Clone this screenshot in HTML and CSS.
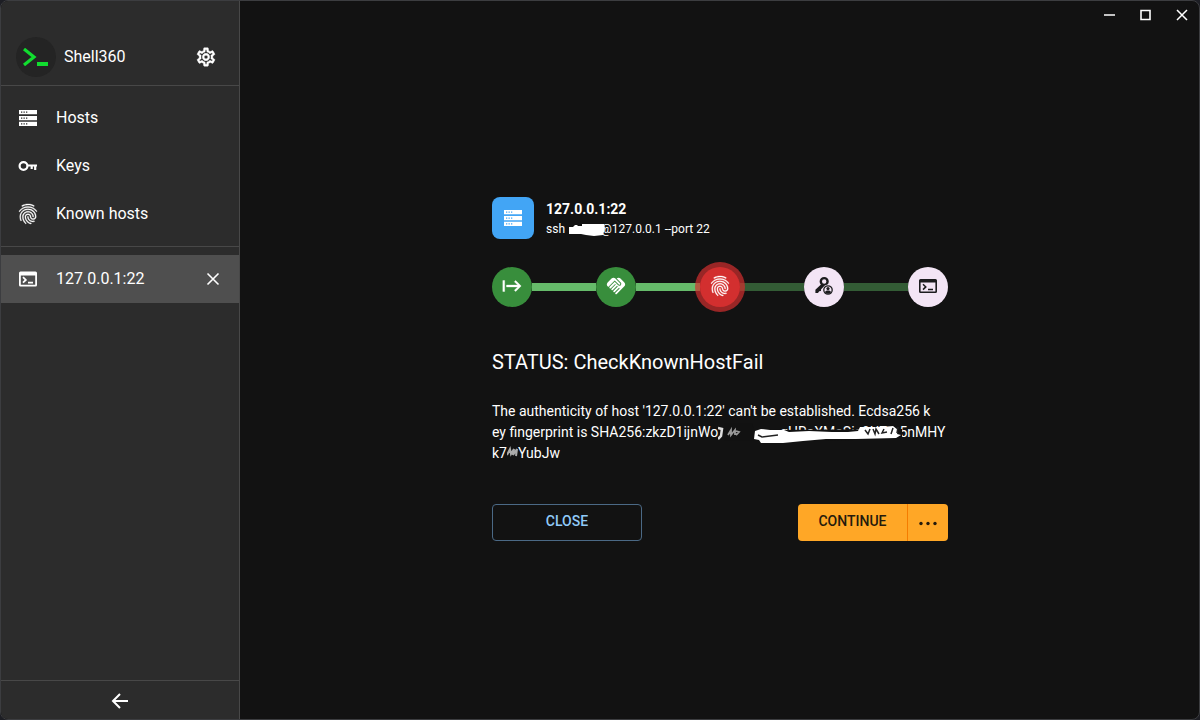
FILE: index.html
```html
<!DOCTYPE html>
<html lang="en">
<head>
<meta charset="utf-8">
<meta name="viewport" content="width=device-width, initial-scale=1">
<title>Shell360</title>
<link rel="stylesheet" href="styles.css">
</head>
<body>
<svg class="sprite" aria-hidden="true">
  <symbol id="i-finger" viewBox="0 0 24 24"><path stroke="currentColor" stroke-width=".35" d="M17.81 4.47c-.08 0-.16-.02-.23-.06C15.66 3.42 14 3 12.01 3c-1.98 0-3.86.47-5.57 1.41-.24.13-.54.04-.68-.2-.13-.24-.04-.55.2-.68C7.82 2.52 9.86 2 12.01 2c2.13 0 3.99.47 6.03 1.52.25.13.34.43.21.67-.09.18-.26.28-.44.28M3.5 9.72c-.1 0-.2-.03-.29-.09-.23-.16-.28-.47-.12-.7.99-1.4 2.25-2.5 3.75-3.27C9.98 4.04 14 4.03 17.15 5.65c1.5.77 2.76 1.86 3.75 3.25.16.22.11.54-.12.7-.23.16-.54.11-.7-.12-.9-1.26-2.04-2.25-3.39-2.94-2.87-1.47-6.54-1.47-9.4.01-1.36.7-2.5 1.7-3.4 2.96-.08.14-.23.21-.39.21m6.25 12.07c-.13 0-.26-.05-.35-.15-.87-.87-1.34-1.43-2.01-2.64-.69-1.23-1.05-2.73-1.05-4.34 0-2.97 2.54-5.39 5.66-5.39s5.66 2.42 5.66 5.39c0 .28-.22.5-.5.5s-.5-.22-.5-.5c0-2.42-2.09-4.39-4.66-4.39-2.57 0-4.66 1.97-4.66 4.39 0 1.44.32 2.77.93 3.85.64 1.15 1.08 1.64 1.85 2.42.19.2.19.51 0 .71-.11.1-.24.15-.37.15m7.17-1.85c-1.19 0-2.24-.3-3.1-.89-1.49-1.01-2.38-2.65-2.38-4.39 0-.28.22-.5.5-.5s.5.22.5.5c0 1.41.72 2.74 1.94 3.56.71.48 1.54.71 2.54.71.24 0 .64-.03 1.04-.1.27-.05.53.13.58.41.05.27-.13.53-.41.58-.57.11-1.07.12-1.21.12M14.91 22c-.04 0-.09-.01-.13-.02-1.59-.44-2.63-1.03-3.72-2.1-1.4-1.39-2.17-3.24-2.17-5.22 0-1.62 1.38-2.94 3.08-2.94 1.7 0 3.08 1.32 3.08 2.94 0 1.07.93 1.94 2.08 1.94s2.08-.87 2.08-1.94c0-3.77-3.25-6.83-7.25-6.83-2.84 0-5.44 1.58-6.61 4.03-.39.81-.59 1.76-.59 2.8 0 .78.07 2.01.67 3.61.1.26-.03.55-.29.64-.26.1-.55-.04-.64-.29-.49-1.31-.73-2.61-.73-3.96 0-1.2.23-2.29.68-3.24 1.33-2.79 4.28-4.6 7.51-4.6 4.55 0 8.25 3.51 8.25 7.83 0 1.62-1.38 2.94-3.08 2.94s-3.08-1.32-3.08-2.94c0-1.07-.93-1.94-2.08-1.94s-2.08.87-2.08 1.94c0 1.71.66 3.31 1.87 4.51.95.94 1.86 1.46 3.27 1.85.27.07.42.35.35.61-.05.23-.26.38-.47.38"/></symbol>
  <symbol id="i-hosts" viewBox="0 0 24 24"><path fill-rule="evenodd" d="M3 4h18v4.300H3zM5 5.500v1.300h1.300V5.500zM7.500 5.500v1.300h1.300V5.500zM10 5.500v1.300h1.300V5.500zM3 9.900h18v4.300H3zM5 11.400v1.300h1.300v-1.300zM7.500 11.400v1.300h1.300v-1.300zM10 11.400v1.300h1.300v-1.300zM3 15.800h18v4.300H3zM5 17.300v1.300h1.300v-1.300zM7.500 17.300v1.300h1.300v-1.300zM10 17.300v1.300h1.300v-1.300z"/></symbol>
  <symbol id="i-key" viewBox="0 0 24 24"><g fill="none" stroke="currentColor" stroke-width="2.200"><circle cx="7.500" cy="12" r="3.900"/><path d="M11.500 11.500H21M15.700 12v3M19.200 12v4"/></g></symbol>
  <symbol id="i-term" viewBox="0 0 24 24"><path fill-rule="evenodd" d="M4.500 4.500h15A1.500 1.500 0 0 1 21 6v12a1.500 1.500 0 0 1-1.500 1.500h-15A1.500 1.500 0 0 1 3 18V6A1.500 1.500 0 0 1 4.500 4.500zM4.800 8.600v9.100h14.400V8.600z"/><path d="m7 10.200 2.800 2.700L7 15.600M12 15.600h5" fill="none" stroke="currentColor" stroke-width="1.800"/></symbol>
  <symbol id="i-x" viewBox="0 0 24 24"><path d="m6.500 6.500 11 11m0-11-11 11" fill="none" stroke="currentColor" stroke-width="1.600"/></symbol>
</svg>
<div class="window">
  <aside class="sidebar">
    <header class="brand">
      <svg class="logo" viewBox="0 0 40 40" aria-hidden="true"><circle cx="20" cy="20" r="20" fill="#242424"/><path d="m8 12 10 8-10 8" fill="none" stroke="#11dd2f" stroke-width="3.200"/><path d="M21 25h11v4H21z" fill="#11dd2f"/></svg>
      <span class="label">Shell360</span>
      <button class="icon-btn" type="button" aria-label="Settings"><svg class="icon-m" viewBox="0 0 24 24"><path stroke="currentColor" stroke-width=".5" d="M19.43 12.98c.04-.32.07-.64.07-.98s-.03-.66-.07-.98l2.11-1.65c.19-.15.24-.42.12-.64l-2-3.46c-.09-.16-.26-.25-.44-.25-.06 0-.12.01-.17.03l-2.49 1c-.52-.4-1.08-.73-1.69-.98l-.38-2.65C14.46 2.180 14.250 2 14 2h-4c-.25 0-.46.18-.49.42l-.38 2.650c-.61.25-1.170.59-1.690.98l-2.490-1c-.06-.02-.12-.03-.18-.03-.17 0-.34.09-.43.25l-2 3.460c-.13.22-.07.49.12.64l2.110 1.650c-.04.32-.07.65-.07.98s.03.66.07.98l-2.110 1.650c-.19.15-.24.42-.12.64l2 3.460c.09.16.26.25.44.25.06 0 .12-.01.17-.03l2.490-1c.52.4 1.080.73 1.690.98l.38 2.650c.03.24.24.42.49.42h4c.25 0 .46-.18.49-.42l.38-2.650c.61-.25 1.170-.59 1.690-.98l2.490 1c.06.02.12.03.18.03.17 0 .34-.09.43-.25l2-3.460c.12-.22.07-.49-.12-.64zm-1.980-1.710c.04.31.05.52.05.73s-.02.43-.05.73l-.14 1.130.89.7 1.080.84-.7 1.210-1.270-.51-1.040-.42-.9.68c-.43.32-.84.56-1.250.73l-1.060.43-.16 1.130-.2 1.350h-1.400l-.19-1.350-.16-1.130-1.060-.43c-.43-.18-.83-.41-1.230-.71l-.91-.7-1.060.43-1.270.51-.7-1.210 1.080-.84.89-.7-.14-1.130c-.03-.31-.05-.54-.05-.74s.02-.43.05-.73l.14-1.130-.89-.7-1.080-.84.7-1.210 1.270.51 1.040.42.9-.68c.43-.32.84-.56 1.250-.73l1.060-.43.16-1.130.2-1.350h1.390l.19 1.350.16 1.130 1.060.43c.43.18.83.41 1.230.71l.91.7 1.060-.43 1.270-.51.7 1.210-1.070.85-.89.7zM12 8c-2.210 0-4 1.790-4 4s1.790 4 4 4 4-1.790 4-4-1.790-4-4-4m0 6c-1.100 0-2-.9-2-2s.9-2 2-2 2 .9 2 2-.9 2-2 2"/></svg></button>
    </header>
    <nav class="list">
      <a class="item" href="#hosts"><svg class="icon-l"><use href="#i-hosts"/></svg><span class="label">Hosts</span></a>
      <a class="item" href="#keys"><svg class="icon-l"><use href="#i-key"/></svg><span class="label">Keys</span></a>
      <a class="item" href="#known"><svg class="icon-l"><use href="#i-finger"/></svg><span class="label">Known hosts</span></a>
    </nav>
    <div class="list sessions">
      <div class="item active"><svg class="icon-l"><use href="#i-term"/></svg><span class="label">127.0.0.1:22</span><button class="icon-btn" type="button" aria-label="Close session"><svg class="icon-l"><use href="#i-x"/></svg></button></div>
    </div>
    <button class="collapse" type="button" aria-label="Collapse sidebar"><svg class="icon-l" viewBox="0 0 24 24"><path d="M20 12H5m7-7-7 7 7 7" fill="none" stroke="currentColor" stroke-width="2"/></svg></button>
  </aside>
  <main class="main">
    <div class="titlebar">
      <button class="win-btn" type="button" aria-label="Minimize"><svg viewBox="0 0 12 12"><path d="M1 6h11" stroke="currentColor" stroke-width="1.500"/></svg></button>
      <button class="win-btn" type="button" aria-label="Maximize"><svg viewBox="0 0 12 12"><path d="M2 1.500h9v9H2z" fill="none" stroke="currentColor" stroke-width="1.600"/></svg></button>
      <button class="win-btn" type="button" aria-label="Close"><svg viewBox="0 0 12 12"><path d="m2 1 10 10M12 1 2 11" stroke="currentColor" stroke-width="1.500"/></svg></button>
    </div>
    <div class="stage">
      <section class="panel">
        <div class="host">
          <div class="host-icon"><svg class="icon-l"><use href="#i-hosts"/></svg></div>
          <div>
            <div class="host-name">127.0.0.1:22</div>
            <div class="host-cmd">ssh <span class="mask-user"><svg viewBox="0 0 38 16"><path d="M1 6h4l2-2h2l1 1h4V3h22l1 4-2 7-9 1-8-1-5-1H1z" fill="#fff"/></svg></span>@127.0.0.1 --port 22</div>
          </div>
        </div>
        <div class="steps">
          <div class="step done"><svg class="icon-m" viewBox="0 0 24 24"><path stroke="currentColor" stroke-width=".4" d="M14.590 7.410 18.170 11H6v2h12.170l-3.590 3.590L16 18l6-6-6-6zM2 6v12h2V6z"/></svg></div>
          <div class="bar"></div>
          <div class="step done"><svg class="icon-m" viewBox="0 0 24 24"><path d="M16.480 10.410c-.39.39-1.040.39-1.430 0l-4.470-4.460-7.050 7.040-.66-.63c-1.170-1.170-1.170-3.070 0-4.240l4.240-4.240c1.170-1.170 3.070-1.170 4.240 0L16.480 9c.39.39.39 1.020 0 1.410m.7-2.120c.78.78.78 2.050 0 2.830-1.270 1.270-2.610.22-2.830 0l-3.760-3.760-5.570 5.570c-.39.39-.39 1.020 0 1.410.39.39 1.020.39 1.420 0l4.620-4.620.71.71-4.620 4.620c-.39.39-.39 1.020 0 1.410.39.39 1.020.39 1.420 0l4.620-4.620.71.71-4.620 4.620c-.39.39-.39 1.020 0 1.410.39.39 1.020.39 1.410 0l4.620-4.620.71.71-4.620 4.620c-.39.39-.39 1.020 0 1.410.39.39 1.020.39 1.410 0l8.320-8.340c1.170-1.170 1.170-3.070 0-4.240l-4.240-4.240c-1.150-1.150-3.010-1.170-4.180-.06z"/></svg></div>
          <div class="bar"></div>
          <div class="step fail"><svg class="icon-l"><use href="#i-finger"/></svg></div>
          <div class="bar dim"></div>
          <div class="step todo"><svg class="icon-l" viewBox="0 0 24 24"><path d="M10 9.500 3.400 15.800v3.200l2.600-.1 1.200-1.600 1.700-.3.200-1.800 3.400-3.200"/><circle cx="12.200" cy="7.500" r="3.400" fill="none" stroke="currentColor" stroke-width="2.400"/><path d="M8 9a5 5 0 0 0 8 1.500l-4 3.200z"/><circle cx="16" cy="16" r="5.500" class="badge-gap"/><circle cx="16" cy="16" r="4.200" fill="none" stroke="currentColor" stroke-width="1.300"/><circle cx="16" cy="14.600" r="1.600"/><path d="M13 18.400c0-2.500 6-2.500 6 0a4 4 0 0 1-6 0"/></svg></div>
          <div class="bar dim"></div>
          <div class="step todo"><svg class="icon-l" viewBox="0 0 24 24"><path fill-rule="evenodd" d="M4.500 5h15A1.500 1.500 0 0 1 21 6.500v11a1.500 1.500 0 0 1-1.500 1.500h-15A1.500 1.500 0 0 1 3 17.500v-11A1.500 1.500 0 0 1 4.500 5zM4.600 8.600v8.800h14.800V8.600z"/><path d="m7 10.200 2.800 2.700L7 15.600M12 15.400h5" fill="none" stroke="currentColor" stroke-width="1.500"/></svg></div>
        </div>
        <h1 class="status">STATUS: CheckKnownHostFail</h1>
        <p class="message">The authenticity of host '127.0.0.1:22' can't be established. Ecdsa256 k<br>ey fingerprint is SHA256:zkzD1ijnWo<span class="mask-hash">gHRaXMaSia9UZ<svg viewBox="0 0 188 21"><path d="M6 0h28l3 10h9l8-3 130-1v9l-74 3H6z" fill="#111"/><path d="m0 5 4 1-1 7-3 3" fill="none" stroke="#ddd" stroke-width="2.500"/><path d="m10 12 3-5v5l4-5v5M18 8l3 1-3 3" fill="none" stroke="#999" stroke-width="1.800"/><path d="m37 8 6-2 9 1 14 0 5 2 20-1 23 1 16 0 10-1 2-4 22 0 11-1 5 4-1 4 4 1-5 3-40 1-30 0-23 2-20 2-22 0-2-3-5-1z" fill="#fff"/><path d="m40 12 4 2 16-2M147 7l3 4 2-5M155 6l2 5 1-5 3 5M166 6l-2 4 5-1M175 5l-2 6M180 4l-1 6" fill="none" stroke="#222" stroke-width="1.500"/></svg></span>5nMHY<br>k7<span class="mask-char"><svg viewBox="0 0 12 21"><path d="m0 12 3-6 1 5 3-5-1 6 4-6-1 7" fill="none" stroke="#aaa" stroke-width="2"/></svg></span>YubJw</p>
        <div class="actions">
          <button class="btn outlined" type="button">CLOSE</button>
          <div class="group">
            <button class="btn filled" type="button">CONTINUE</button>
            <button class="btn filled more" type="button" aria-label="More options"><svg class="icon-l" viewBox="0 0 24 24"><circle cx="5" cy="12.500" r="1.700"/><circle cx="12" cy="12.500" r="1.700"/><circle cx="19" cy="12.500" r="1.700"/></svg></button>
          </div>
        </div>
      </section>
    </div>
  </main>
</div>
</body>
</html>
```

FILE: styles.css
```css
* { box-sizing: border-box; }
body {
  margin: 0;
  background: #1d1e24;
  color: #fff;
  font-family: Roboto, "Liberation Sans", sans-serif;
  font-size: 16px;
}
button { font: inherit; color: inherit; background: none; border: 0; padding: 0; }
svg { display: block; fill: currentColor; }
.sprite { position: absolute; width: 0; height: 0; }
.icon-l { width: 24px; height: 24px; flex: none; }
.icon-m { width: 22px; height: 22px; flex: none; }

.window {
  display: flex;
  min-height: 100vh;
  border: 1px solid #3c3d40;
  border-radius: 8px;
  overflow: hidden;
  background: #121212;
}
.sidebar {
  display: flex;
  flex-direction: column;
  flex: none;
  width: 239px;
  background: #2c2c2c;
  border-right: 1px solid #484848;
}
.brand {
  display: flex;
  align-items: center;
  gap: 8px;
  padding: 36px 16px 8px 15px;
  border-bottom: 1px solid #484848;
}
.logo { width: 40px; height: 40px; flex: none; }
.label { flex: 1; padding-bottom: 2px; }
.icon-btn { display: grid; place-items: center; width: 34px; height: 34px; }
.list { padding: 8px 0; border-bottom: 1px solid #484848; }
.sessions { flex: 1; }
.item {
  display: flex;
  align-items: center;
  gap: 16px;
  height: 48px;
  padding: 0 9px 0 15px;
  color: #fff;
  text-decoration: none;
}
.active { background: #4f4f4f; }
.collapse { display: grid; place-items: center; height: 38px; padding-top: 2px; }

.main { display: flex; flex: 1; flex-direction: column; min-width: 0; }
.titlebar { display: flex; justify-content: flex-end; height: 28px; }
.win-btn { display: grid; place-items: center; width: 36px; height: 28px; }
.win-btn svg { width: 12px; height: 12px; overflow: visible; }
.stage { display: grid; flex: 1; place-items: center; padding: 0 0 10px 1px; }
.panel { width: 456px; max-width: 100%; }

.host { display: flex; gap: 12px; }
.host-icon {
  display: grid;
  place-items: center;
  width: 42px;
  height: 42px;
  border-radius: 8px;
  background: #42a5f5;
}
.host-name { font-size: 14px; line-height: 24px; font-weight: 700; }
.host-cmd { font-size: 12px; line-height: 16px; }
.mask-user, .mask-char, .mask-hash { position: relative; }
.mask-user, .mask-char { display: inline-block; vertical-align: top; }
.mask-user { width: 33px; height: 16px; }
.mask-char { width: 11px; height: 21px; }
.mask-hash { padding: 0 12px 0 62px; }
.mask-user svg, .mask-char svg, .mask-hash svg { position: absolute; left: 0; }
.mask-user svg { top: 0; width: 38px; height: 16px; }
.mask-char svg { top: 0; width: 12px; height: 21px; }
.mask-hash svg { top: -1px; width: 188px; height: 21px; }

.steps { display: flex; align-items: center; margin-top: 28px; }
.step {
  display: grid;
  place-items: center;
  width: 40px;
  height: 40px;
  padding-bottom: 2px;
  border-radius: 50%;
  flex: none;
}
.done { background: #388e3c; }
.fail { z-index: 1; background: #d32f2f; box-shadow: 0 0 0 5px rgba(211, 47, 47, .7); }
.todo { background: #f3e5f5; color: #1c1c1e; }
.badge-gap { fill: #f3e5f5; }
.bar { flex: 1; height: 8px; background: #66bb6a; }
.dim { background: #335c35; }

.status { margin: 40px 0 24px; font-size: 20px; line-height: 30px; font-weight: 400; }
.message { margin: 0; font-size: 14px; line-height: 21px; word-break: break-all; }
.actions { display: flex; justify-content: space-between; margin-top: 40px; }
.btn { height: 37px; width: 150px; padding-bottom: 3px; font-size: 14px; font-weight: 500; border-radius: 4px; }
.outlined { border: 1px solid #4b6985; color: #90caf9; }
.group { display: flex; }
.filled { width: 110px; background: #ffa726; color: #241a0c; border-right: 1px solid #f57c00; border-radius: 4px 0 0 4px; }
.more { display: grid; place-items: center; width: 40px; padding-bottom: 0; border-right: 0; border-radius: 0 4px 4px 0; }
```
